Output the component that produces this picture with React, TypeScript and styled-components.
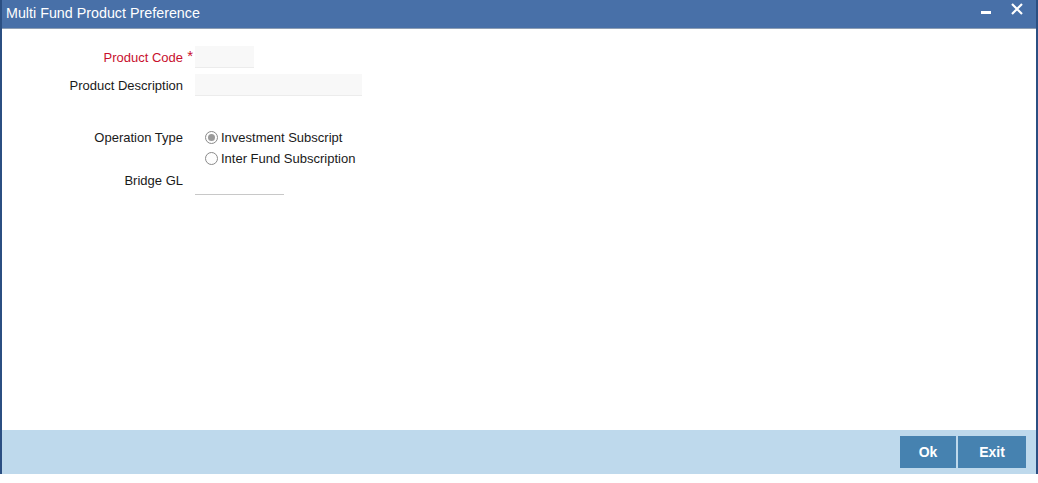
import React, { useState } from 'react';
import styled, { createGlobalStyle } from 'styled-components';

const GlobalStyle = createGlobalStyle`
	html, body {
		margin: 0;
		padding: 0;
		background: #ffffff;
	}
	body {
		font-family: Arial, 'Liberation Sans', sans-serif;
	}
`;

const Window = styled.div`
	width: 1038px;
	height: 474px;
	box-sizing: border-box;
	border-left: 2px solid #2b4f82;
	border-right: 2px solid #2b4f82;
	display: flex;
	flex-direction: column;
	background: #ffffff;
`;

const TitleBar = styled.div`
	height: 28px;
	background: #4870a8;
	border-bottom: 1px solid #8c9db3;
	display: flex;
	align-items: center;
	justify-content: space-between;
	padding: 0 0 0 4px;
	color: #ffffff;
`;

const Title = styled.div`
	font-size: 14.3px;
	line-height: 1;
	margin-top: -2px;
`;

const TitleActions = styled.div`
	display: flex;
	align-items: flex-start;
	align-self: flex-start;
	gap: 20px;
	padding: 3px 13px 0 0;
`;

const IconButton = styled.button`
	border: none;
	background: transparent;
	padding: 0;
	display: flex;
	align-items: center;
	cursor: pointer;
`;

const Body = styled.div`
	flex: 1;
	padding-top: 17px;
`;

const Row = styled.div<{ $gap?: number }>`
	display: grid;
	grid-template-columns: 181px auto;
	column-gap: 12px;
	align-items: center;
	margin-bottom: ${(p) => p.$gap ?? 6}px;
`;

const Label = styled.div<{ $required?: boolean; $top?: boolean }>`
	position: relative;
	text-align: right;
	font-size: 13px;
	line-height: ${(p) => (p.$top ? '21px' : 'normal')};
	align-self: ${(p) => (p.$top ? 'start' : 'center')};
	color: ${(p) => (p.$required ? '#c8102e' : '#1a1a1a')};
	white-space: nowrap;
`;

const RequiredMark = styled.span`
	position: absolute;
	right: -10px;
	top: -3px;
	font-size: 15px;
	color: #c8102e;
`;

const TextField = styled.input<{ $width: number }>`
	width: ${(p) => p.$width}px;
	height: 22px;
	box-sizing: border-box;
	border: none;
	border-bottom: 1px solid #ececec;
	background: #f8f8f8;
	outline: none;
	font-family: inherit;
	font-size: 13px;
	padding: 0 3px;
`;

const LineField = styled(TextField)`
	height: 25px;
	background: transparent;
	border-bottom: 1px solid #c8c8c8;
`;

const RadioGroup = styled.div`
	display: flex;
	flex-direction: column;
	padding-left: 10px;
`;

const RadioOption = styled.label`
	display: flex;
	align-items: center;
	height: 21px;
	font-size: 13px;
	color: #1a1a1a;
	cursor: pointer;
`;

const RadioDot = styled.span<{ $checked?: boolean }>`
	width: 11px;
	height: 11px;
	border-radius: 50%;
	border: 1px solid #8a8a8a;
	background: #fdfdfd;
	margin-right: 3px;
	display: flex;
	align-items: center;
	justify-content: center;

	&::after {
		content: '';
		width: 7px;
		height: 7px;
		border-radius: 50%;
		background: ${(p) => (p.$checked ? '#9a9a9a' : 'transparent')};
	}
`;

const Footer = styled.div`
	height: 44px;
	background: #bed9ec;
	display: flex;
	align-items: center;
	justify-content: flex-end;
	padding-right: 10px;
	gap: 2px;
`;

const ActionButton = styled.button<{ $width: number }>`
	width: ${(p) => p.$width}px;
	height: 32px;
	border: none;
	background: #4682b0;
	color: #ffffff;
	font-family: Arial, 'Liberation Sans', sans-serif;
	font-size: 14px;
	font-weight: bold;
	cursor: pointer;
`;

const options = ['Investment Subscript', 'Inter Fund Subscription'];

export default function App() {
	const [operation, setOperation] = useState(0);

	return (
		<>
			<GlobalStyle />
			<Window>
				<TitleBar>
					<Title>Multi Fund Product Preference</Title>
					<TitleActions>
						<IconButton aria-label="minimize">
							<svg width="10" height="12" viewBox="0 0 10 12">
								<rect x="0" y="8" width="10" height="3" fill="#ffffff" />
							</svg>
						</IconButton>
						<IconButton aria-label="close">
							<svg width="12" height="12" viewBox="0 0 12 12">
								<path d="M1 1 L11 11 M11 1 L1 11" stroke="#ffffff" strokeWidth="2.2" />
							</svg>
						</IconButton>
					</TitleActions>
				</TitleBar>
				<Body>
					<Row>
						<Label $required>
							Product Code
							<RequiredMark>*</RequiredMark>
						</Label>
						<TextField $width={59} />
					</Row>
					<Row $gap={31}>
						<Label>Product Description</Label>
						<TextField $width={167} />
					</Row>
					<Row $gap={1}>
						<Label $top>Operation Type</Label>
						<RadioGroup>
							{options.map((o, i) => (
								<RadioOption key={o} onClick={() => setOperation(i)}>
									<RadioDot $checked={operation === i} />
									{o}
								</RadioOption>
							))}
						</RadioGroup>
					</Row>
					<Row>
						<Label $top>Bridge GL</Label>
						<LineField $width={89} />
					</Row>
				</Body>
				<Footer>
					<ActionButton $width={56}>Ok</ActionButton>
					<ActionButton $width={68}>Exit</ActionButton>
				</Footer>
			</Window>
		</>
	);
}
